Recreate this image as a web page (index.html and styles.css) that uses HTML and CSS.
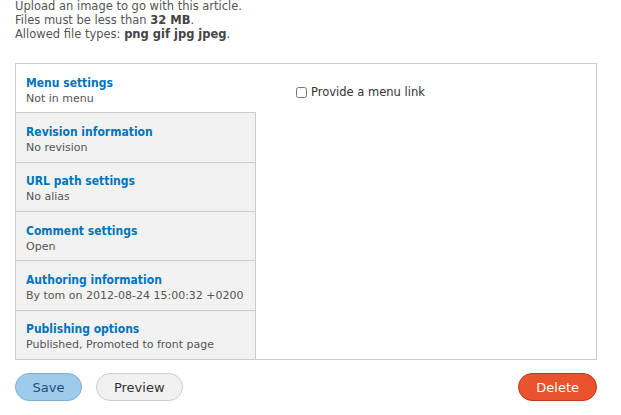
FILE: index.html
```html
<!DOCTYPE html>
<html lang="en">
<head>
    <meta charset="UTF-8">
    <title>Edit Article</title>
    <link rel="stylesheet" href="styles.css">
</head>
<body>
    <!-- Image field help text -->
    <div class="description">
        Upload an image to go with this article.<br>
        Files must be less than <strong>32 MB</strong>.<br>
        Allowed file types: <strong>png gif jpg jpeg</strong>.
    </div>

    <!-- Vertical tabs -->
    <div class="vertical-tabs">
        <ul class="tab-list">
            <li class="tab selected">
                <a href="#">Menu settings</a>
                <span class="summary">Not in menu</span>
            </li>
            <li class="tab">
                <a href="#">Revision information</a>
                <span class="summary">No revision</span>
            </li>
            <li class="tab">
                <a href="#">URL path settings</a>
                <span class="summary">No alias</span>
            </li>
            <li class="tab">
                <a href="#">Comment settings</a>
                <span class="summary">Open</span>
            </li>
            <li class="tab">
                <a href="#">Authoring information</a>
                <span class="summary">By tom on 2012-08-24 15:00:32 +0200</span>
            </li>
            <li class="tab">
                <a href="#">Publishing options</a>
                <span class="summary">Published, Promoted to front page</span>
            </li>
        </ul>
        <div class="tab-pane">
            <label class="checkbox">
                <input type="checkbox">
                Provide a menu link
            </label>
        </div>
    </div>

    <!-- Form actions -->
    <div class="actions">
        <button class="button primary">Save</button>
        <button class="button">Preview</button>
        <button class="button danger">Delete</button>
    </div>
</body>
</html>
```

FILE: styles.css
```css
body {
    margin: 0;
    padding: 0 24px 0 15px;
    font-family: "DejaVu Sans", Verdana, sans-serif;
    font-size: 11px;
    color: #333;
    background: #fff;
}

.description {
    margin-top: -1px;
    font-size: 11.5px;
    line-height: 14px;
    color: #555;
}

.description strong {
    color: #444;
}

.vertical-tabs {
    display: flex;
    margin-top: 22px;
    border: 1px solid #ccc;
    height: 295px;
}

.tab-list {
    list-style: none;
    margin: 0;
    padding: 0;
    width: 240px;
    display: flex;
    flex-direction: column;
}

.tab {
    flex: 1;
    display: flex;
    flex-direction: column;
    justify-content: center;
    padding: 4px 10px 0;
    background: #f2f2f2;
    border-right: 1px solid #ccc;
    border-top: 1px solid #ccc;
}

.tab:first-child {
    border-top: none;
}

.tab.selected {
    background: #fff;
    border-right-color: #fff;
}

.tab a {
    color: #0074bd;
    font-family: "DejaVu Sans Condensed", "DejaVu Sans", sans-serif;
    font-weight: bold;
    font-size: 12px;
    text-decoration: none;
    line-height: 16px;
}

.tab .summary {
    color: #555;
    font-size: 11px;
    line-height: 15px;
}

.tab-pane {
    flex: 1;
    padding: 21px 40px;
}

.checkbox {
    display: flex;
    align-items: center;
    gap: 4px;
    font-size: 11.5px;
    color: #333;
}

.checkbox input {
    margin: 0;
    width: 11px;
    height: 11px;
}

.actions {
    display: flex;
    gap: 14px;
    margin-top: 13px;
}

.button {
    font-family: inherit;
    font-size: 13px;
    color: #333;
    height: 28px;
    padding: 0 17px;
    border-radius: 14px;
    border: 1px solid #ccc;
    background: #f1f1f1;
}

.button.primary {
    background: #9fcbea;
    border-color: #7fb0d8;
    color: #1e4f7a;
    padding: 0 16.5px;
}

.button.danger {
    margin-left: auto;
    background: #e9532e;
    border-color: #b83c1e;
    color: #fff;
    padding: 0 17px;
}
```
